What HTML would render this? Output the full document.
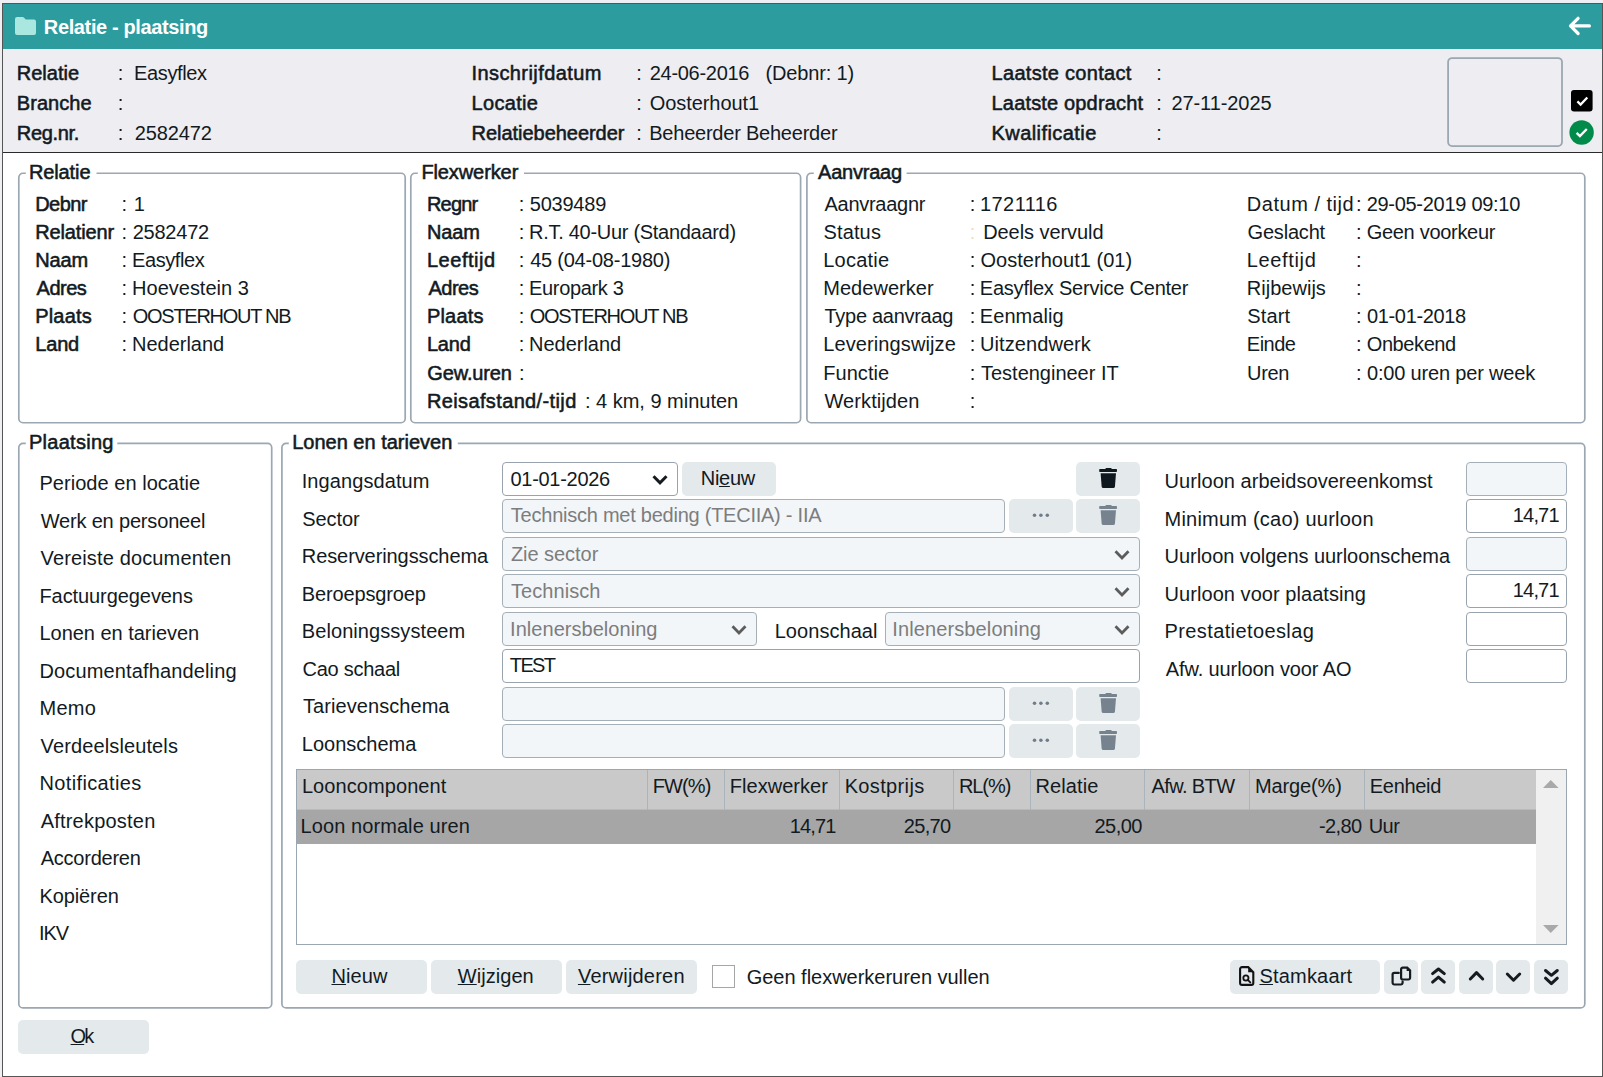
<!DOCTYPE html><html lang="nl"><head><meta charset="utf-8"><title>Relatie - plaatsing</title><style>

html,body{margin:0;padding:0}
body{width:1603px;height:1077px;overflow:hidden;background:#efeef3;position:relative;font-family:"Liberation Sans",sans-serif;color:#121a22}
.abs,.win,.title,.hdr,.grp,.fld,.btn,.t{position:absolute}
.win{left:2px;top:3px;width:1601px;height:1074px;box-sizing:border-box;border:1px solid #555;background:#fff}
.title{left:3px;top:4px;width:1599px;height:45px;background:#2d9c9f}
.hdr{left:3px;top:49px;width:1599px;height:103px;background:#eeedf2;border-bottom:1px solid #2a2a2a}
.fld{box-sizing:border-box;border:1px solid #98a3ad;border-radius:4px}
.fld.dis{background:#f2f6f9;border-color:#a5afb8}
.fld.en{background:#fff}
.btn{box-sizing:border-box;background:#e4e9ec;border-radius:5px}
.chev{position:absolute;right:9.5px;top:11px}
.ctr{position:absolute;left:50%;top:50%;transform:translate(-50%,-50%)}
.t{white-space:pre;line-height:20px;font-size:20px}
.t u{text-decoration:underline;text-decoration-thickness:1px;text-underline-offset:1px}

</style></head><body>
<div class="win"></div>
<div class="title"></div>
<div class="hdr"></div>
<svg class="abs" style="left:15px;top:17px" width="21" height="18" viewBox="0 0 21 18"><path d="M2 0h5.6c.6 0 1.1.25 1.5.7L10.8 2.6H19a2 2 0 0 1 2 2V16a2 2 0 0 1-2 2H2a2 2 0 0 1-2-2V2a2 2 0 0 1 2-2z" fill="#a9e7e0"/></svg>
<svg class="abs" style="left:1566px;top:14px" width="28" height="24" viewBox="0 0 28 24"><path d="M23.400 11.900H5M12.100 4.300L4.500 11.900l7.600 7.600" fill="none" stroke="#fff" stroke-width="3.200" stroke-linecap="round" stroke-linejoin="round"/></svg>
<svg class="abs" style="left:1445px;top:55px" width="120" height="94" viewBox="0 0 120 94"><rect x="3.1" y="3.05" width="113.9" height="88" rx="4" fill="none" stroke="#9ba7b1" stroke-width="1.8"/></svg>
<svg class="abs" style="left:1571px;top:90px" width="22" height="22" viewBox="0 0 22 22"><rect width="21.6" height="21.4" rx="3" fill="#000"/><path d="M6.400 11.400l3.200 3.100 6.700-7" fill="none" stroke="#fff" stroke-width="2.3"/></svg>
<svg class="abs" style="left:1569px;top:120px" width="26" height="26" viewBox="0 0 26 26"><circle cx="12.6" cy="12.5" r="12.2" fill="#008b4a"/><path d="M7.600 12.900l3.300 3.200 6.900-7.100" fill="none" stroke="#fff" stroke-width="2.4"/></svg>
<svg class="abs grp" style="left:16px;top:171px" width="393" height="255" viewBox="0 0 393 255"><path d="M80.50 2.25H385.00A4.2 4.2 0 0 1 389.20 6.45V247.55A4.2 4.2 0 0 1 385.00 251.75H7.00A4.2 4.2 0 0 1 2.80 247.55V6.45A4.2 4.2 0 0 1 7.00 2.25H9.80" fill="none" stroke="#9ba7b1" stroke-width="1.7"/></svg>
<svg class="abs grp" style="left:408px;top:171px" width="396" height="255" viewBox="0 0 396 255"><path d="M116.00 2.25H388.40A4.2 4.2 0 0 1 392.60 6.45V247.55A4.2 4.2 0 0 1 388.40 251.75H7.00A4.2 4.2 0 0 1 2.80 247.55V6.45A4.2 4.2 0 0 1 7.00 2.25H9.80" fill="none" stroke="#9ba7b1" stroke-width="1.7"/></svg>
<svg class="abs grp" style="left:804px;top:171px" width="784" height="255" viewBox="0 0 784 255"><path d="M102.60 2.25H776.60A4.2 4.2 0 0 1 780.80 6.45V247.55A4.2 4.2 0 0 1 776.60 251.75H7.10A4.2 4.2 0 0 1 2.90 247.55V6.45A4.2 4.2 0 0 1 7.10 2.25H9.80" fill="none" stroke="#9ba7b1" stroke-width="1.7"/></svg>
<svg class="abs grp" style="left:16px;top:441px" width="259" height="570" viewBox="0 0 259 570"><path d="M101.30 2.30H251.50A4.2 4.2 0 0 1 255.70 6.50V562.70A4.2 4.2 0 0 1 251.50 566.90H7.00A4.2 4.2 0 0 1 2.80 562.70V6.50A4.2 4.2 0 0 1 7.00 2.30H9.80" fill="none" stroke="#9ba7b1" stroke-width="1.7"/></svg>
<svg class="abs grp" style="left:279px;top:441px" width="1309" height="570" viewBox="0 0 1309 570"><path d="M178.80 2.30H1301.60A4.2 4.2 0 0 1 1305.80 6.50V562.70A4.2 4.2 0 0 1 1301.60 566.90H7.10A4.2 4.2 0 0 1 2.90 562.70V6.50A4.2 4.2 0 0 1 7.10 2.30H9.80" fill="none" stroke="#9ba7b1" stroke-width="1.7"/></svg>
<div class="btn" style="left:18px;top:1020px;width:131px;height:34px;"></div>
<div class="fld en" style="left:502px;top:462px;width:176px;height:34px;"><svg class="chev" width="16" height="12" viewBox="0 0 16 12"><path d="M1.500 2.300L8 8.900l6.500-6.600" fill="none" stroke="#161b20" stroke-width="3"/></svg></div>
<div class="btn" style="left:682px;top:462px;width:94px;height:34px;"></div>
<div class="btn" style="left:1076px;top:462px;width:64px;height:34px;"><svg class="abs" style="left:22px;top:6px" width="20" height="22" viewBox="0 0 20 22"><path d="M6.8 1.3L7.600.400Q7.800.1 8.300.1H12.800Q13.300.1 13.500.4L14.300 1.300Z" fill="#10181f"/><rect x="1.200" y="1.050" width="17.800" height="2.950" rx=".8" fill="#10181f"/><path d="M2.600 5.250H18L16.950 18.400Q16.800 19.950 15.300 19.950H5.300Q3.800 19.950 3.650 18.400Z" fill="#10181f"/></svg></div>
<div class="fld dis" style="left:502px;top:499px;width:503px;height:34px;"></div>
<div class="btn" style="left:1009px;top:499px;width:64px;height:34px;"><svg class="abs" style="left:22px;top:13px" width="20" height="7" viewBox="0 0 20 7"><circle cx="3.5" cy="3.15" r="1.75" fill="#6f7c8a"/><circle cx="9.9" cy="3.15" r="1.75" fill="#6f7c8a"/><circle cx="16.3" cy="3.15" r="1.75" fill="#6f7c8a"/></svg></div>
<div class="btn" style="left:1076px;top:499px;width:64px;height:34px;"><svg class="abs" style="left:22px;top:6px" width="20" height="22" viewBox="0 0 20 22"><path d="M6.8 1.3L7.600.400Q7.800.1 8.300.1H12.800Q13.300.1 13.500.4L14.300 1.300Z" fill="#76838f"/><rect x="1.200" y="1.050" width="17.800" height="2.950" rx=".8" fill="#76838f"/><path d="M2.600 5.250H18L16.950 18.400Q16.800 19.950 15.300 19.950H5.300Q3.800 19.950 3.650 18.400Z" fill="#76838f"/></svg></div>
<div class="fld dis" style="left:502px;top:537px;width:638px;height:34px;"><svg class="chev" width="16" height="12" viewBox="0 0 16 12"><path d="M1.500 2.300L8 8.900l6.500-6.600" fill="none" stroke="#5c5c5c" stroke-width="2.8"/></svg></div>
<div class="fld dis" style="left:502px;top:574px;width:638px;height:34px;"><svg class="chev" width="16" height="12" viewBox="0 0 16 12"><path d="M1.500 2.300L8 8.900l6.500-6.600" fill="none" stroke="#5c5c5c" stroke-width="2.8"/></svg></div>
<div class="fld dis" style="left:502px;top:612px;width:255px;height:34px;"><svg class="chev" width="16" height="12" viewBox="0 0 16 12"><path d="M1.500 2.300L8 8.900l6.500-6.600" fill="none" stroke="#5c5c5c" stroke-width="2.8"/></svg></div>
<div class="fld dis" style="left:885px;top:612px;width:255px;height:34px;"><svg class="chev" width="16" height="12" viewBox="0 0 16 12"><path d="M1.500 2.300L8 8.900l6.500-6.600" fill="none" stroke="#5c5c5c" stroke-width="2.8"/></svg></div>
<div class="fld en" style="left:502px;top:649px;width:638px;height:34px;"></div>
<div class="fld dis" style="left:502px;top:687px;width:503px;height:34px;"></div>
<div class="btn" style="left:1009px;top:687px;width:64px;height:34px;"><svg class="abs" style="left:22px;top:13px" width="20" height="7" viewBox="0 0 20 7"><circle cx="3.5" cy="3.15" r="1.75" fill="#6f7c8a"/><circle cx="9.9" cy="3.15" r="1.75" fill="#6f7c8a"/><circle cx="16.3" cy="3.15" r="1.75" fill="#6f7c8a"/></svg></div>
<div class="btn" style="left:1076px;top:687px;width:64px;height:34px;"><svg class="abs" style="left:22px;top:6px" width="20" height="22" viewBox="0 0 20 22"><path d="M6.8 1.3L7.600.400Q7.800.1 8.300.1H12.800Q13.300.1 13.500.4L14.300 1.300Z" fill="#76838f"/><rect x="1.200" y="1.050" width="17.800" height="2.950" rx=".8" fill="#76838f"/><path d="M2.600 5.250H18L16.950 18.400Q16.800 19.950 15.300 19.950H5.300Q3.800 19.950 3.650 18.400Z" fill="#76838f"/></svg></div>
<div class="fld dis" style="left:502px;top:724px;width:503px;height:34px;"></div>
<div class="btn" style="left:1009px;top:724px;width:64px;height:34px;"><svg class="abs" style="left:22px;top:13px" width="20" height="7" viewBox="0 0 20 7"><circle cx="3.5" cy="3.15" r="1.75" fill="#6f7c8a"/><circle cx="9.9" cy="3.15" r="1.75" fill="#6f7c8a"/><circle cx="16.3" cy="3.15" r="1.75" fill="#6f7c8a"/></svg></div>
<div class="btn" style="left:1076px;top:724px;width:64px;height:34px;"><svg class="abs" style="left:22px;top:6px" width="20" height="22" viewBox="0 0 20 22"><path d="M6.8 1.3L7.600.400Q7.800.1 8.300.1H12.800Q13.300.1 13.500.4L14.300 1.300Z" fill="#76838f"/><rect x="1.200" y="1.050" width="17.800" height="2.950" rx=".8" fill="#76838f"/><path d="M2.600 5.250H18L16.950 18.400Q16.800 19.950 15.300 19.950H5.300Q3.800 19.950 3.650 18.400Z" fill="#76838f"/></svg></div>
<div class="fld dis" style="left:1466px;top:462px;width:101px;height:34px;"></div>
<div class="fld en" style="left:1466px;top:499px;width:101px;height:34px;"></div>
<div class="fld dis" style="left:1466px;top:537px;width:101px;height:34px;"></div>
<div class="fld en" style="left:1466px;top:574px;width:101px;height:34px;"></div>
<div class="fld en" style="left:1466px;top:612px;width:101px;height:34px;"></div>
<div class="fld en" style="left:1466px;top:649px;width:101px;height:34px;"></div>
<div class="abs" style="left:296px;top:769px;width:1271px;height:176px;border:1px solid #9aa6b0;background:#fff;box-sizing:border-box"></div>
<div class="abs" style="left:297px;top:770px;width:1239px;height:40px;background:#c9c9c9"></div>
<div class="abs" style="left:297px;top:810px;width:1239px;height:34px;background:#a6a6a6"></div>
<div class="abs" style="left:297px;top:809px;width:1239px;height:1px;background:#b3bcc4"></div>
<div class="abs" style="left:297px;top:843px;width:1239px;height:1px;background:#9ea8b0"></div>
<div class="abs" style="left:1536px;top:770px;width:30px;height:174px;background:#f0f0f0"></div>
<svg class="abs" style="left:1542px;top:779px" width="18" height="10" viewBox="0 0 18 10"><path d="M1 9L8.800 1l7.800 8z" fill="#a9a9a9"/></svg>
<svg class="abs" style="left:1542px;top:924px" width="18" height="10" viewBox="0 0 18 10"><path d="M1 1L8.800 9l7.800-8z" fill="#a9a9a9"/></svg>
<div class="abs" style="left:647px;top:770px;width:1px;height:40px;background:#aab4bd"></div>
<div class="abs" style="left:724px;top:770px;width:1px;height:40px;background:#aab4bd"></div>
<div class="abs" style="left:839px;top:770px;width:1px;height:40px;background:#aab4bd"></div>
<div class="abs" style="left:953px;top:770px;width:1px;height:40px;background:#aab4bd"></div>
<div class="abs" style="left:1030px;top:770px;width:1px;height:40px;background:#aab4bd"></div>
<div class="abs" style="left:1144px;top:770px;width:1px;height:40px;background:#aab4bd"></div>
<div class="abs" style="left:1249px;top:770px;width:1px;height:40px;background:#aab4bd"></div>
<div class="abs" style="left:1364px;top:770px;width:1px;height:40px;background:#aab4bd"></div>
<div class="btn" style="left:296px;top:960px;width:131px;height:34px;"></div>
<div class="btn" style="left:431px;top:960px;width:131px;height:34px;"></div>
<div class="btn" style="left:566px;top:960px;width:131px;height:34px;"></div>
<div class="abs" style="left:712px;top:965px;width:23px;height:23px;border:1px solid #a6a6a6;background:#fff;box-sizing:border-box"></div>
<div class="btn" style="left:1230px;top:960px;width:150px;height:34px;"><svg class="abs" style="left:9px;top:6px" width="16" height="21" viewBox="0 0 16 21"><path d="M3 1.100h6.200l5.100 5.100V17a1.900 1.900 0 0 1-1.900 1.900H3A1.900 1.900 0 0 1 1.100 17V3A1.900 1.900 0 0 1 3 1.100z" fill="none" stroke="#111" stroke-width="2.100"/><path d="M9.200 1.100v5.100h5.100z" fill="#111"/><circle cx="6.900" cy="12" r="2.600" fill="none" stroke="#111" stroke-width="1.800"/><path d="M8.800 13.900l2.500 2.500" stroke="#111" stroke-width="1.900" stroke-linecap="round"/></svg></div>
<div class="btn" style="left:1384px;top:960px;width:34px;height:34px;"><svg class="abs" style="left:0;top:0" width="34" height="34" viewBox="0 0 34 34"><path d="M18.800 7.600h4.400l2.900 2.900v7.300a1.700 1.700 0 0 1-1.700 1.700h-5.600a1.700 1.700 0 0 1-1.700-1.700V9.300a1.700 1.700 0 0 1 1.700-1.700z" fill="none" stroke="#151b21" stroke-width="2.200"/><path d="M22.600 7.300v3.600h3.600z" fill="#151b21"/><path d="M14.800 12.900h-4.500a1.700 1.700 0 0 0-1.700 1.700v8.200a1.700 1.700 0 0 0 1.700 1.700h6.600a1.700 1.700 0 0 0 1.700-1.700v-1.200" fill="none" stroke="#151b21" stroke-width="2.200" stroke-linecap="round"/></svg></div>
<div class="btn" style="left:1421px;top:960px;width:34px;height:34px;"><svg class="abs" style="left:0;top:0" width="34" height="34" viewBox="0 0 34 34"><path d="M11.600 13.600L17.450 9l5.850 4.600M11.600 22.100L17.450 17.100l5.850 5" fill="none" stroke="#151b21" stroke-width="3" stroke-linecap="round" stroke-linejoin="round"/></svg></div>
<div class="btn" style="left:1459px;top:960px;width:34px;height:34px;"><svg class="abs" style="left:0;top:0" width="34" height="34" viewBox="0 0 34 34"><path d="M11.300 19L17.500 12.600l6.200 6.400" fill="none" stroke="#151b21" stroke-width="3" stroke-linecap="round" stroke-linejoin="round"/></svg></div>
<div class="btn" style="left:1496px;top:960px;width:34px;height:34px;"><svg class="abs" style="left:0;top:0" width="34" height="34" viewBox="0 0 34 34"><path d="M11.300 14L17.500 20.200l6.200-6.200" fill="none" stroke="#151b21" stroke-width="3" stroke-linecap="round" stroke-linejoin="round"/></svg></div>
<div class="btn" style="left:1534px;top:960px;width:34px;height:34px;"><svg class="abs" style="left:0;top:0" width="34" height="34" viewBox="0 0 34 34"><path d="M11.500 10.500L17.400 15.300l5.900-4.800M11.500 18.200L17.400 23.600l5.900-5.400" fill="none" stroke="#151b21" stroke-width="3" stroke-linecap="round" stroke-linejoin="round"/></svg></div>
<span class="t" id="t0" style="left:43.86px;top:17.00px;font-weight:bold;color:#fff;letter-spacing:-0.378px;">Relatie - plaatsing</span>
<span class="t" id="t1" style="left:16.80px;top:63.00px;-webkit-text-stroke:0.55px;">Relatie</span>
<span class="t" id="t2" style="left:117.85px;top:63.00px;">:</span>
<span class="t" id="t3" style="left:134.10px;top:63.00px;letter-spacing:-0.389px;">Easyflex</span>
<span class="t" id="t4" style="left:16.80px;top:93.00px;-webkit-text-stroke:0.55px;letter-spacing:0.040px;">Branche</span>
<span class="t" id="t5" style="left:117.85px;top:93.00px;">:</span>
<span class="t" id="t6" style="left:16.80px;top:123.00px;-webkit-text-stroke:0.55px;letter-spacing:-0.333px;">Reg.nr.</span>
<span class="t" id="t7" style="left:117.85px;top:123.00px;">:</span>
<span class="t" id="t8" style="left:134.65px;top:123.00px;letter-spacing:-0.118px;">2582472</span>
<span class="t" id="t9" style="left:471.45px;top:63.00px;-webkit-text-stroke:0.55px;letter-spacing:0.426px;">Inschrijfdatum</span>
<span class="t" id="t10" style="left:636.30px;top:63.00px;">:</span>
<span class="t" id="t11" style="left:649.72px;top:63.00px;letter-spacing:-0.289px;">24-06-2016</span>
<span class="t" id="t12" style="left:471.57px;top:93.00px;-webkit-text-stroke:0.55px;letter-spacing:0.306px;">Locatie</span>
<span class="t" id="t13" style="left:636.30px;top:93.00px;">:</span>
<span class="t" id="t14" style="left:649.77px;top:93.00px;letter-spacing:-0.076px;">Oosterhout1</span>
<span class="t" id="t15" style="left:471.57px;top:123.00px;-webkit-text-stroke:0.55px;letter-spacing:-0.038px;">Relatiebeheerder</span>
<span class="t" id="t16" style="left:636.30px;top:123.00px;">:</span>
<span class="t" id="t17" style="left:649.22px;top:123.00px;letter-spacing:-0.223px;">Beheerder Beheerder</span>
<span class="t" id="t18" style="left:765.45px;top:63.00px;letter-spacing:-0.156px;">(Debnr: 1)</span>
<span class="t" id="t19" style="left:991.57px;top:63.00px;-webkit-text-stroke:0.55px;letter-spacing:0.290px;">Laatste contact</span>
<span class="t" id="t20" style="left:1156.30px;top:63.00px;">:</span>
<span class="t" id="t21" style="left:991.57px;top:93.00px;-webkit-text-stroke:0.55px;letter-spacing:0.164px;">Laatste opdracht</span>
<span class="t" id="t22" style="left:1156.30px;top:93.00px;">:</span>
<span class="t" id="t23" style="left:1171.41px;top:93.00px;letter-spacing:-0.071px;">27-11-2025</span>
<span class="t" id="t24" style="left:991.57px;top:123.00px;-webkit-text-stroke:0.55px;letter-spacing:0.425px;">Kwalificatie</span>
<span class="t" id="t25" style="left:1156.30px;top:123.00px;">:</span>
<span class="t" id="t26" style="left:28.90px;top:162.00px;-webkit-text-stroke:0.55px;letter-spacing:-0.106px;">Relatie</span>
<span class="t" id="t27" style="left:421.38px;top:162.00px;-webkit-text-stroke:0.55px;letter-spacing:-0.096px;">Flexwerker</span>
<span class="t" id="t28" style="left:818.11px;top:162.00px;-webkit-text-stroke:0.55px;letter-spacing:-0.245px;">Aanvraag</span>
<span class="t" id="t29" style="left:28.90px;top:431.60px;-webkit-text-stroke:0.55px;letter-spacing:0.288px;">Plaatsing</span>
<span class="t" id="t30" style="left:292.16px;top:431.60px;-webkit-text-stroke:0.55px;letter-spacing:0.005px;">Lonen en tarieven</span>
<span class="t" id="t31" style="left:35.22px;top:194.00px;-webkit-text-stroke:0.55px;letter-spacing:-0.577px;">Debnr</span>
<span class="t" id="t32" style="left:121.58px;top:194.00px;">:</span>
<span class="t" id="t33" style="left:133.68px;top:194.00px;">1</span>
<span class="t" id="t34" style="left:35.22px;top:222.00px;-webkit-text-stroke:0.55px;letter-spacing:-0.135px;">Relatienr</span>
<span class="t" id="t35" style="left:121.58px;top:222.00px;">:</span>
<span class="t" id="t36" style="left:132.65px;top:222.00px;letter-spacing:-0.217px;">2582472</span>
<span class="t" id="t37" style="left:35.22px;top:250.00px;-webkit-text-stroke:0.55px;letter-spacing:-0.125px;">Naam</span>
<span class="t" id="t38" style="left:121.58px;top:250.00px;">:</span>
<span class="t" id="t39" style="left:132.10px;top:250.00px;letter-spacing:-0.430px;">Easyflex</span>
<span class="t" id="t40" style="left:36.62px;top:278.00px;-webkit-text-stroke:0.55px;letter-spacing:-0.506px;">Adres</span>
<span class="t" id="t41" style="left:121.58px;top:278.00px;">:</span>
<span class="t" id="t42" style="left:132.10px;top:278.00px;letter-spacing:-0.006px;">Hoevestein 3</span>
<span class="t" id="t43" style="left:35.22px;top:306.00px;-webkit-text-stroke:0.55px;letter-spacing:0.176px;">Plaats</span>
<span class="t" id="t44" style="left:121.58px;top:306.00px;">:</span>
<span class="t" id="t45" style="left:132.74px;top:306.00px;letter-spacing:-1.268px;">OOSTERHOUT NB</span>
<span class="t" id="t46" style="left:35.22px;top:334.00px;-webkit-text-stroke:0.55px;letter-spacing:-0.168px;">Land</span>
<span class="t" id="t47" style="left:121.58px;top:334.00px;">:</span>
<span class="t" id="t48" style="left:132.10px;top:334.00px;letter-spacing:-0.025px;">Nederland</span>
<span class="t" id="t49" style="left:426.90px;top:194.00px;-webkit-text-stroke:0.55px;letter-spacing:-0.775px;">Regnr</span>
<span class="t" id="t50" style="left:518.85px;top:194.00px;">:</span>
<span class="t" id="t51" style="left:529.75px;top:194.00px;letter-spacing:-0.220px;">5039489</span>
<span class="t" id="t52" style="left:426.90px;top:222.00px;-webkit-text-stroke:0.55px;letter-spacing:-0.123px;">Naam</span>
<span class="t" id="t53" style="left:518.85px;top:222.00px;">:</span>
<span class="t" id="t54" style="left:529.10px;top:222.00px;letter-spacing:-0.293px;">R.T. 40-Uur (Standaard)</span>
<span class="t" id="t55" style="left:426.90px;top:250.00px;-webkit-text-stroke:0.55px;letter-spacing:0.549px;">Leeftijd</span>
<span class="t" id="t56" style="left:518.85px;top:250.00px;">:</span>
<span class="t" id="t57" style="left:530.17px;top:250.00px;letter-spacing:-0.229px;">45 (04-08-1980)</span>
<span class="t" id="t58" style="left:428.39px;top:278.00px;-webkit-text-stroke:0.55px;letter-spacing:-0.479px;">Adres</span>
<span class="t" id="t59" style="left:518.85px;top:278.00px;">:</span>
<span class="t" id="t60" style="left:529.10px;top:278.00px;letter-spacing:-0.346px;">Europark 3</span>
<span class="t" id="t61" style="left:426.90px;top:306.00px;-webkit-text-stroke:0.55px;letter-spacing:0.201px;">Plaats</span>
<span class="t" id="t62" style="left:518.85px;top:306.00px;">:</span>
<span class="t" id="t63" style="left:529.74px;top:306.00px;letter-spacing:-1.267px;">OOSTERHOUT NB</span>
<span class="t" id="t64" style="left:426.90px;top:334.00px;-webkit-text-stroke:0.55px;letter-spacing:-0.203px;">Land</span>
<span class="t" id="t65" style="left:518.85px;top:334.00px;">:</span>
<span class="t" id="t66" style="left:529.10px;top:334.00px;letter-spacing:-0.025px;">Nederland</span>
<span class="t" id="t67" style="left:427.36px;top:363.00px;-webkit-text-stroke:0.55px;letter-spacing:-0.142px;">Gew.uren</span>
<span class="t" id="t68" style="left:519.11px;top:363.00px;">:</span>
<span class="t" id="t69" style="left:426.90px;top:391.00px;-webkit-text-stroke:0.55px;letter-spacing:0.374px;">Reisafstand/-tijd</span>
<span class="t" id="t70" style="left:585.11px;top:391.00px;">:</span>
<span class="t" id="t71" style="left:596.08px;top:391.00px;letter-spacing:-0.011px;">4 km, 9 minuten</span>
<span class="t" id="t72" style="left:824.47px;top:194.00px;letter-spacing:-0.268px;">Aanvraagnr</span>
<span class="t" id="t73" style="left:969.85px;top:194.00px;">:</span>
<span class="t" id="t74" style="left:979.99px;top:194.00px;letter-spacing:0.436px;">1721116</span>
<span class="t" id="t75" style="left:823.46px;top:222.00px;letter-spacing:0.146px;">Status</span>
<span class="t" id="t76" style="left:969.85px;top:222.00px;color:#f6dcc0;">:</span>
<span class="t" id="t77" style="left:983.16px;top:222.00px;letter-spacing:-0.065px;">Deels vervuld</span>
<span class="t" id="t78" style="left:823.22px;top:250.00px;letter-spacing:0.227px;">Locatie</span>
<span class="t" id="t79" style="left:969.85px;top:250.00px;">:</span>
<span class="t" id="t80" style="left:980.50px;top:250.00px;letter-spacing:0.028px;">Oosterhout1 (01)</span>
<span class="t" id="t81" style="left:823.22px;top:278.00px;letter-spacing:0.042px;">Medewerker</span>
<span class="t" id="t82" style="left:969.85px;top:278.00px;">:</span>
<span class="t" id="t83" style="left:979.82px;top:278.00px;letter-spacing:-0.218px;">Easyflex Service Center</span>
<span class="t" id="t84" style="left:824.53px;top:306.00px;letter-spacing:-0.284px;">Type aanvraag</span>
<span class="t" id="t85" style="left:969.85px;top:306.00px;">:</span>
<span class="t" id="t86" style="left:979.82px;top:306.00px;letter-spacing:0.069px;">Eenmalig</span>
<span class="t" id="t87" style="left:823.22px;top:334.00px;letter-spacing:0.106px;">Leveringswijze</span>
<span class="t" id="t88" style="left:969.85px;top:334.00px;">:</span>
<span class="t" id="t89" style="left:979.97px;top:334.00px;letter-spacing:0.085px;">Uitzendwerk</span>
<span class="t" id="t90" style="left:823.22px;top:363.00px;letter-spacing:0.060px;">Functie</span>
<span class="t" id="t91" style="left:969.85px;top:363.00px;">:</span>
<span class="t" id="t92" style="left:981.03px;top:363.00px;letter-spacing:-0.015px;">Testengineer IT</span>
<span class="t" id="t93" style="left:824.48px;top:391.00px;letter-spacing:0.092px;">Werktijden</span>
<span class="t" id="t94" style="left:969.85px;top:391.00px;">:</span>
<span class="t" id="t95" style="left:1246.82px;top:194.00px;letter-spacing:0.519px;">Datum / tijd</span>
<span class="t" id="t96" style="left:1356.12px;top:194.00px;">:</span>
<span class="t" id="t97" style="left:1366.65px;top:194.00px;letter-spacing:-0.284px;">29-05-2019 09:10</span>
<span class="t" id="t98" style="left:1247.55px;top:222.00px;letter-spacing:-0.193px;">Geslacht</span>
<span class="t" id="t99" style="left:1356.12px;top:222.00px;">:</span>
<span class="t" id="t100" style="left:1366.73px;top:222.00px;letter-spacing:-0.300px;">Geen voorkeur</span>
<span class="t" id="t101" style="left:1246.82px;top:250.00px;letter-spacing:0.637px;">Leeftijd</span>
<span class="t" id="t102" style="left:1356.12px;top:250.00px;">:</span>
<span class="t" id="t103" style="left:1246.82px;top:278.00px;letter-spacing:0.015px;">Rijbewijs</span>
<span class="t" id="t104" style="left:1356.12px;top:278.00px;">:</span>
<span class="t" id="t105" style="left:1247.24px;top:306.00px;letter-spacing:0.134px;">Start</span>
<span class="t" id="t106" style="left:1356.12px;top:306.00px;">:</span>
<span class="t" id="t107" style="left:1366.99px;top:306.00px;letter-spacing:-0.339px;">01-01-2018</span>
<span class="t" id="t108" style="left:1246.82px;top:334.00px;letter-spacing:-0.523px;">Einde</span>
<span class="t" id="t109" style="left:1356.12px;top:334.00px;">:</span>
<span class="t" id="t110" style="left:1366.74px;top:334.00px;letter-spacing:-0.406px;">Onbekend</span>
<span class="t" id="t111" style="left:1246.97px;top:363.00px;letter-spacing:-0.278px;">Uren</span>
<span class="t" id="t112" style="left:1356.12px;top:363.00px;">:</span>
<span class="t" id="t113" style="left:1366.99px;top:363.00px;letter-spacing:-0.176px;">0:00 uren per week</span>
<span class="t" id="t114" style="left:39.44px;top:473.00px;letter-spacing:0.038px;">Periode en locatie</span>
<span class="t" id="t115" style="left:40.64px;top:511.00px;letter-spacing:-0.168px;">Werk en personeel</span>
<span class="t" id="t116" style="left:40.59px;top:548.00px;letter-spacing:0.142px;">Vereiste documenten</span>
<span class="t" id="t117" style="left:39.44px;top:586.00px;letter-spacing:-0.076px;">Factuurgegevens</span>
<span class="t" id="t118" style="left:39.44px;top:623.00px;letter-spacing:-0.024px;">Lonen en tarieven</span>
<span class="t" id="t119" style="left:39.44px;top:661.00px;letter-spacing:0.143px;">Documentafhandeling</span>
<span class="t" id="t120" style="left:39.44px;top:698.00px;letter-spacing:0.278px;">Memo</span>
<span class="t" id="t121" style="left:40.59px;top:736.00px;letter-spacing:0.121px;">Verdeelsleutels</span>
<span class="t" id="t122" style="left:39.44px;top:773.00px;letter-spacing:0.365px;">Notificaties</span>
<span class="t" id="t123" style="left:40.63px;top:811.00px;letter-spacing:0.215px;">Aftrekposten</span>
<span class="t" id="t124" style="left:40.63px;top:848.00px;letter-spacing:-0.224px;">Accorderen</span>
<span class="t" id="t125" style="left:39.44px;top:886.00px;letter-spacing:-0.103px;">Kopiëren</span>
<span class="t" id="t126" style="left:39.03px;top:923.00px;letter-spacing:-1.055px;">IKV</span>
<span class="t" id="t127" style="left:70.58px;top:1026.00px;letter-spacing:-1.925px;"><u>O</u>k</span>
<span class="t" id="t128" style="left:301.73px;top:471.00px;letter-spacing:0.089px;">Ingangsdatum</span>
<span class="t" id="t129" style="left:302.24px;top:509.00px;letter-spacing:-0.081px;">Sector</span>
<span class="t" id="t130" style="left:301.82px;top:546.00px;letter-spacing:-0.090px;">Reserveringsschema</span>
<span class="t" id="t131" style="left:301.82px;top:584.00px;letter-spacing:-0.151px;">Beroepsgroep</span>
<span class="t" id="t132" style="left:301.82px;top:621.00px;letter-spacing:0.071px;">Beloningssysteem</span>
<span class="t" id="t133" style="left:302.50px;top:659.00px;letter-spacing:-0.262px;">Cao schaal</span>
<span class="t" id="t134" style="left:303.04px;top:696.00px;letter-spacing:0.063px;">Tarievenschema</span>
<span class="t" id="t135" style="left:301.82px;top:734.00px;">Loonschema</span>
<span class="t" id="t136" style="left:510.50px;top:469.00px;letter-spacing:-0.292px;">01-01-2026</span>
<span class="t" id="t137" style="left:700.72px;top:468.00px;letter-spacing:-0.285px;">Ni<u>e</u>uw</span>
<span class="t" id="t138" style="left:510.86px;top:505.00px;color:#7d7d7d;letter-spacing:-0.245px;">Technisch met beding (TECIIA) - IIA</span>
<span class="t" id="t139" style="left:510.88px;top:544.00px;color:#7d7d7d;letter-spacing:-0.041px;">Zie sector</span>
<span class="t" id="t140" style="left:511.09px;top:581.00px;color:#7d7d7d;letter-spacing:0.045px;">Technisch</span>
<span class="t" id="t141" style="left:510.09px;top:619.00px;color:#7d7d7d;letter-spacing:0.037px;">Inlenersbeloning</span>
<span class="t" id="t142" style="left:774.66px;top:621.00px;letter-spacing:0.057px;">Loonschaal</span>
<span class="t" id="t143" style="left:892.33px;top:619.00px;color:#7d7d7d;letter-spacing:0.111px;">Inlenersbeloning</span>
<span class="t" id="t144" style="left:509.86px;top:655.00px;letter-spacing:-1.688px;">TEST</span>
<span class="t" id="t145" style="left:1164.62px;top:471.00px;letter-spacing:0.045px;">Uurloon arbeidsovereenkomst</span>
<span class="t" id="t146" style="left:1164.50px;top:509.00px;letter-spacing:0.226px;">Minimum (cao) uurloon</span>
<span class="t" id="t147" style="left:1512.85px;top:505.00px;letter-spacing:-0.846px;">14,71</span>
<span class="t" id="t148" style="left:1164.62px;top:546.00px;letter-spacing:-0.048px;">Uurloon volgens uurloonschema</span>
<span class="t" id="t149" style="left:1164.62px;top:584.00px;letter-spacing:0.051px;">Uurloon voor plaatsing</span>
<span class="t" id="t150" style="left:1512.85px;top:580.00px;letter-spacing:-0.846px;">14,71</span>
<span class="t" id="t151" style="left:1164.50px;top:621.00px;letter-spacing:0.393px;">Prestatietoeslag</span>
<span class="t" id="t152" style="left:1165.80px;top:659.00px;letter-spacing:-0.113px;">Afw. uurloon voor AO</span>
<span class="t" id="t153" style="left:301.88px;top:776.00px;letter-spacing:0.083px;">Looncomponent</span>
<span class="t" id="t154" style="left:652.66px;top:776.00px;letter-spacing:-0.862px;">FW(%)</span>
<span class="t" id="t155" style="left:729.72px;top:776.00px;letter-spacing:0.049px;">Flexwerker</span>
<span class="t" id="t156" style="left:844.66px;top:776.00px;letter-spacing:0.356px;">Kostprijs</span>
<span class="t" id="t157" style="left:958.88px;top:776.00px;letter-spacing:-1.052px;">RL(%)</span>
<span class="t" id="t158" style="left:1035.50px;top:776.00px;letter-spacing:0.108px;">Relatie</span>
<span class="t" id="t159" style="left:1151.43px;top:776.00px;letter-spacing:-0.587px;">Afw. BTW</span>
<span class="t" id="t160" style="left:1254.88px;top:776.00px;letter-spacing:-0.106px;">Marge(%)</span>
<span class="t" id="t161" style="left:1369.82px;top:776.00px;letter-spacing:-0.312px;">Eenheid</span>
<span class="t" id="t162" style="left:300.50px;top:816.00px;letter-spacing:0.086px;">Loon normale uren</span>
<span class="t" id="t163" style="left:789.77px;top:816.00px;letter-spacing:-0.830px;">14,71</span>
<span class="t" id="t164" style="left:903.70px;top:816.00px;letter-spacing:-0.638px;">25,70</span>
<span class="t" id="t165" style="left:1094.47px;top:816.00px;letter-spacing:-0.542px;">25,00</span>
<span class="t" id="t166" style="left:1318.88px;top:816.00px;letter-spacing:-0.598px;">-2,80</span>
<span class="t" id="t167" style="left:1368.74px;top:816.00px;letter-spacing:-0.553px;">Uur</span>
<span class="t" id="t168" style="left:331.50px;top:966.30px;letter-spacing:0.100px;"><u>N</u>ieuw</span>
<span class="t" id="t169" style="left:457.80px;top:966.30px;letter-spacing:0.049px;"><u>W</u>ijzigen</span>
<span class="t" id="t170" style="left:577.94px;top:966.30px;letter-spacing:0.206px;"><u>V</u>erwijderen</span>
<span class="t" id="t171" style="left:746.73px;top:967.30px;letter-spacing:-0.020px;">Geen flexwerkeruren vullen</span>
<span class="t" id="t172" style="left:1259.46px;top:966.00px;letter-spacing:0.190px;"><u>S</u>tamkaart</span>
</body></html>
